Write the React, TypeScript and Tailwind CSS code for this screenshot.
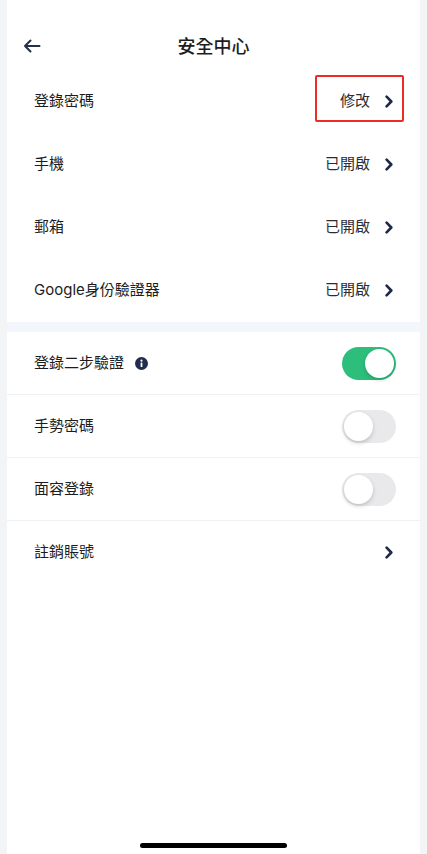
import { ReactNode } from 'react';

const font = { fontFamily: '"Inter", "Noto Sans CJK TC", "Noto Sans", sans-serif' };

function Chevron() {
  return (
    <svg width="8" height="13" viewBox="0 0 8 13" fill="none" className="shrink-0">
      <path d="M1.6 1.6L6.3 6.5L1.6 11.4" stroke="#1e2848" strokeWidth="2.6" strokeLinecap="round" strokeLinejoin="round" />
    </svg>
  );
}

function Toggle({ on }: { on: boolean }) {
  return (
    <div
      className={
        on
          ? 'w-[54px] h-[33px] rounded-full bg-[#2dbe7c] p-[2px] flex justify-end'
          : 'w-[54px] h-[33px] rounded-full bg-[#e9e9eb] p-[2px] flex justify-start'
      }
    >
      <div className="w-[29px] h-[29px] rounded-full bg-white shadow-[0_2px_4px_rgba(0,0,0,0.18)]" />
    </div>
  );
}

function LinkRow({ label, value, children }: { label: string; value?: string; children?: ReactNode }) {
  return (
    <div className="relative h-[63px] flex items-center justify-between pl-[27px] pr-[27px]">
      <span className="text-[15px] text-[#1c1d22]">{label}</span>
      <div className="flex items-center gap-[15px]">
        {value && <span className="text-[15px] text-[#2c2d33]">{value}</span>}
        <Chevron />
      </div>
      {children}
    </div>
  );
}

export default function App() {
  return (
    <div className="min-h-screen bg-[#f3f4f6] px-[7px]" style={font}>
      <div className="bg-white min-h-[854px] flex flex-col">
        {/* Header */}
        <div className="h-[70px] pt-[32px] px-[16px]">
          <div className="relative h-[28px] flex items-center justify-center">
            <svg className="absolute left-[0px]" width="18" height="14" viewBox="0 0 18 14" fill="none">
              <path d="M16.5 7H2M7.5 1.5L2 7L7.5 12.5" stroke="#273049" strokeWidth="2" strokeLinecap="round" strokeLinejoin="round" />
            </svg>
            <h1 className="text-[18px] font-medium text-[#1c1d22]">安全中心</h1>
          </div>
        </div>

        {/* Account links */}
        <LinkRow label="登錄密碼" value="修改">
          <div className="absolute left-[308px] right-[16px] top-[5px] h-[47px] border-2 border-[#ee2a24] rounded-[2px]" />
        </LinkRow>
        <LinkRow label="手機" value="已開啟" />
        <LinkRow label="郵箱" value="已開啟" />
        <LinkRow label="Google身份驗證器" value="已開啟" />

        <div className="h-[10px] bg-[#f3f6fd]" />

        {/* Switches */}
        <div className="h-[63px] flex items-center justify-between pl-[27px] pr-[24px] border-b border-[#f0f1f3]">
          <div className="flex items-center gap-[11px]">
            <span className="text-[15px] text-[#1c1d22]">登錄二步驗證</span>
            <svg width="13" height="13" viewBox="0 0 13 13">
              <circle cx="6.5" cy="6.5" r="6.5" fill="#222c4c" />
              <circle cx="6.5" cy="3.7" r="1.1" fill="white" />
              <rect x="5.6" y="5.5" width="1.8" height="4.6" rx="0.6" fill="white" />
            </svg>
          </div>
          <Toggle on />
        </div>
        <div className="h-[63px] flex items-center justify-between pl-[27px] pr-[24px] border-b border-[#f0f1f3]">
          <span className="text-[15px] text-[#1c1d22]">手勢密碼</span>
          <Toggle on={false} />
        </div>
        <div className="h-[63px] flex items-center justify-between pl-[27px] pr-[24px] border-b border-[#f0f1f3]">
          <span className="text-[15px] text-[#1c1d22]">面容登錄</span>
          <Toggle on={false} />
        </div>
        <LinkRow label="註銷賬號" />

        <div className="flex-1" />
        {/* Home indicator */}
        <div className="flex justify-center pb-[6px]">
          <div className="w-[147px] h-[5px] rounded-full bg-black" />
        </div>
      </div>
    </div>
  );
}
